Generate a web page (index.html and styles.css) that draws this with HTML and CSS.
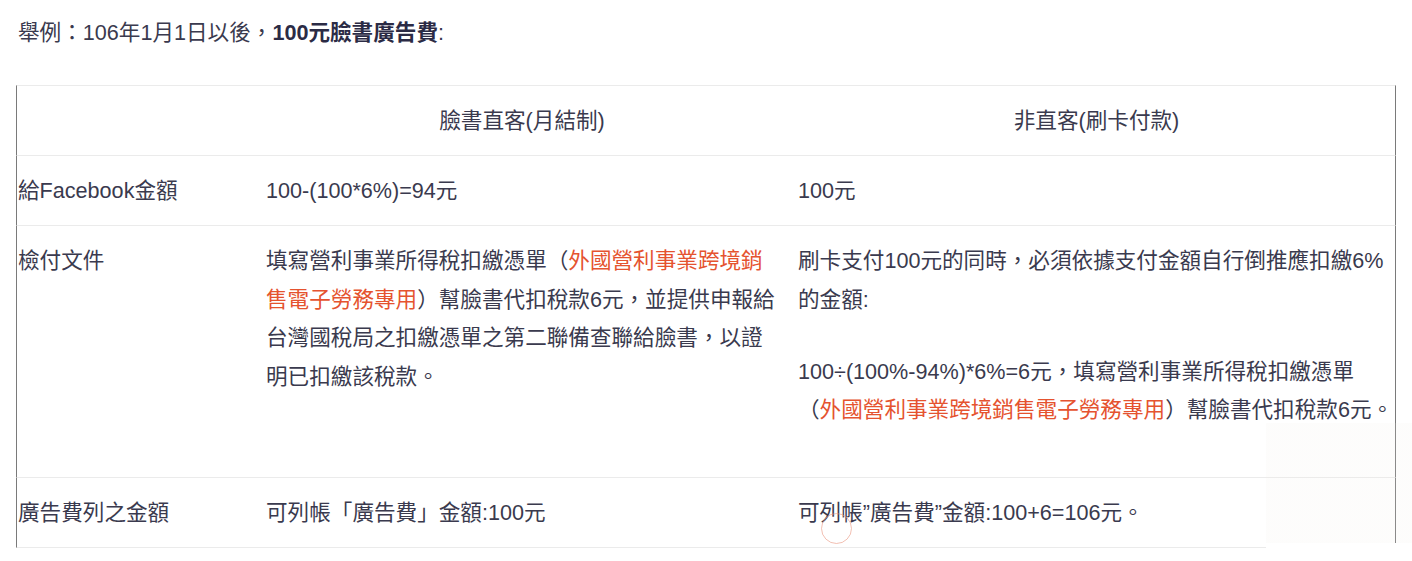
FILE: index.html
```html
<!DOCTYPE html>
<html lang="zh-Hant">
<head>
<meta charset="utf-8">
<title>臉書廣告費</title>
<link rel="stylesheet" href="styles.css">
</head>
<body>
<div class="page">
  <p class="intro">舉例：106年1月1日以後，<strong>100元臉書廣告費</strong>:</p>
  <table class="fee-table">
    <colgroup>
      <col class="c1">
      <col class="c2">
      <col class="c3">
    </colgroup>
    <tr class="head">
      <td class="first"></td>
      <td class="mid center">臉書直客(月結制)</td>
      <td class="last center">非直客(刷卡付款)</td>
    </tr>
    <tr>
      <td class="first">給Facebook金額</td>
      <td class="mid">100-(100*6%)=94元</td>
      <td class="last">100元</td>
    </tr>
    <tr>
      <td class="first">檢付文件</td>
      <td class="mid"><p class="para">填寫營利事業所得稅扣繳憑單（<span class="red">外國營利事業跨境銷售電子勞務專用</span>）幫臉書代扣稅款6元，並提供申報給台灣國稅局之扣繳憑單之第二聯備查聯給臉書，以證明已扣繳該稅款。</p></td>
      <td class="last"><p class="para">刷卡支付100元的同時，必須依據支付金額自行倒推應扣繳6%的金額:</p><p class="para">100÷(100%-94%)*6%=6元，填寫營利事業所得稅扣繳憑單（<span class="red">外國營利事業跨境銷售電子勞務專用</span>）幫臉書代扣稅款6元。</p></td>
    </tr>
    <tr>
      <td class="first">廣告費列之金額</td>
      <td class="mid">可列帳「廣告費」金額:100元</td>
      <td class="last">可列帳”廣告費”金額:100+6=106元。</td>
    </tr>
  </table>
  <div class="corner-overlay"></div>
  <div class="click-ring"></div>
</div>
</body>
</html>
```

FILE: styles.css
```css
html, body {
  margin: 0;
  padding: 0;
  background: #ffffff;
}

.page {
  position: relative;
  width: 1412px;
  height: 561px;
  overflow: hidden;
  padding: 14px 16px 0;
  box-sizing: border-box;
  font-family: "Liberation Sans", "Noto Sans CJK TC", sans-serif;
  font-size: 21.6px;
  line-height: 38.4px;
  color: #3a3a4e;
}

.intro {
  margin: 0 0 32.6px 2px;
}

.intro strong {
  font-weight: bold;
  color: #2b2b45;
}

.fee-table {
  width: 1380px;
  table-layout: fixed;
  border-collapse: separate;
  border-spacing: 0;
}

.c1 { width: 242px; }
.c2 { width: 532px; }
.c3 { width: 606px; }

.fee-table td {
  vertical-align: top;
  padding: 16.3px 0 14.3px 8px;
  border-bottom: 1px solid #ebebeb;
}

.fee-table .head td {
  border-top: 1px solid #ebebeb;
}

.fee-table td.first {
  padding-left: 1px;
  border-left: 1px solid #7a7a7a;
}

.fee-table td.mid {
  padding-right: 12px;
}

.fee-table td.last {
  padding-right: 0;
  border-right: 1px solid #7a7a7a;
}

.fee-table td.center {
  text-align: center;
}

.para {
  margin: 0 0 33.4px;
}

.red {
  color: #e5532f;
}

.corner-overlay {
  position: absolute;
  left: 1266px;
  top: 423px;
  width: 146px;
  height: 138px;
  background: linear-gradient(to bottom, rgba(240, 236, 230, 0.14) 0, rgba(240, 236, 230, 0.14) 120px, #ffffff 120px);
}

.click-ring {
  position: absolute;
  left: 821px;
  top: 513px;
  width: 31px;
  height: 31px;
  box-sizing: border-box;
  border: 1.5px solid rgba(234, 150, 128, 0.6);
  border-radius: 50%;
}
```
